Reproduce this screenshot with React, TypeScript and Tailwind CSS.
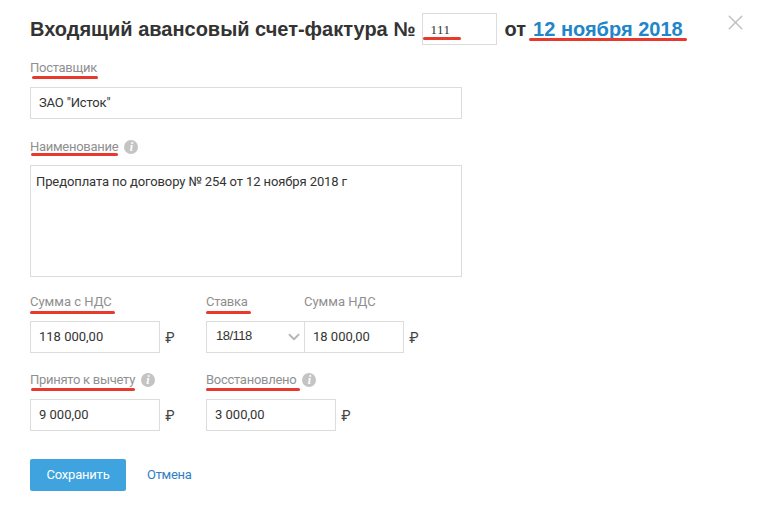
import { ChevronDown, X } from "lucide-react";
import { ReactNode } from "react";

const Underline = ({ className }: { className: string }) => (
    <span className={"absolute h-[3px] rounded-full bg-[#e8392f] " + className} />
);

const Info = () => (
    <span className="ml-[6px] flex h-[14px] w-[14px] items-center justify-center rounded-full bg-[#c4c4c4] font-['Liberation_Serif',serif] text-[12px] font-bold italic leading-none tracking-normal text-white">
        i
    </span>
);

const Label = ({ text, info, line, wide }: { text: string; info?: boolean; line?: string; wide?: boolean }) => (
    <div
        className={
            "relative flex h-[18px] items-center text-[13px] leading-[18px] text-[#8f8f8f] " +
            (wide ? "tracking-normal" : "tracking-[-0.28px]")
        }
    >
        {text}
        {info && <Info />}
        {line && <Underline className={line} />}
    </div>
);

const Field = ({ value, className }: { value: string; className: string }) => (
    <div className={"flex h-8 items-center border border-[#dcdcdc] pl-2 text-[13px] text-[#333333] " + className}>
        {value}
    </div>
);

const Ruble = ({ className }: { className: string }) => (
    <span className={"pt-[2px] font-['Inter',sans-serif] text-[14px] leading-none text-[#444444] " + className}>₽</span>
);

const Column = ({ children, className }: { children: ReactNode; className: string }) => (
    <div className={"flex flex-col gap-[10px] " + className}>{children}</div>
);

const App = () => {
    return (
        <div className="relative h-[512px] w-[762px] overflow-hidden bg-white pl-[30px] pt-[13px] font-['Roboto',sans-serif]">
            <div className="flex h-8 items-center font-['Liberation_Sans',sans-serif] text-[20px] font-bold text-[#333333]">
                <span>Входящий авансовый счет-фактура №</span>
                <div className="relative ml-[6px] flex h-8 w-[75px] items-center border border-[#dcdcdc] pl-2 pt-[2px] font-['Liberation_Serif',serif] text-[13px] font-normal tracking-[0.4px] text-[#333333]">
                    111
                    <Underline className="left-0 top-[23px] w-[38px]" />
                </div>
                <span className="ml-2">от</span>
                <span className="relative ml-[7px] text-[#2186c9]">
                    12 ноября 2018
                    <Underline className="-left-1 top-[24px] h-[3px] w-[158px]" />
                </span>
            </div>
            <button className="absolute left-[723px] top-[10px] text-[#c0c0c0]">
                <X size={25} strokeWidth={1.4} />
            </button>

            <div className="mt-[14px] w-[432px]">
                <Label text="Поставщик" line="left-[2px] top-[17px] w-[66px]" />
                <div className="mt-[10px] flex h-8 items-center border border-[#dcdcdc] pl-2 text-[13px] tracking-[-0.15px] text-[#333333]">
                    ЗАО "Исток"
                </div>
                <div className="mt-[19px]">
                    <Label text="Наименование" info line="left-[1px] top-[15px] w-[87px]" />
                </div>
                <div className="mt-[9px] h-[112px] border border-[#dcdcdc] px-[5px] py-[7px] text-[13px] leading-[18px] tracking-[-0.1px] text-[#333333]">
                    Предоплата по договору № 254 от 12 ноября 2018 г
                </div>
            </div>

            <div className="mt-[16px] flex">
                <Column className="w-[176px]">
                    <Label text="Сумма с НДС" wide line="left-0 top-[18px] w-[85px]" />
                    <div className="flex items-center">
                        <Field value="118 000,00" className="w-[130px]" />
                        <Ruble className="ml-[5px]" />
                    </div>
                </Column>
                <Column className="w-[98px]">
                    <Label text="Ставка" line="left-0 top-[18px] w-[45px]" />
                    <div className="flex h-8 w-[99px] items-center justify-between border border-r-0 border-[#dcdcdc] pl-[9px] pr-[2px] font-['Liberation_Sans',sans-serif] text-[13px] tracking-[-0.5px] text-[#333333]">
                        <span className="-mt-[2px]">18/118</span>
                        <ChevronDown size={18} strokeWidth={2.4} className="text-[#b5b5b5]" />
                    </div>
                </Column>
                <Column className="">
                    <Label text="Сумма НДС" wide />
                    <div className="flex items-center">
                        <Field value="18 000,00" className="w-[100px]" />
                        <Ruble className="ml-[5px]" />
                    </div>
                </Column>
            </div>

            <div className="mt-[18px] flex">
                <Column className="w-[176px]">
                    <Label text="Принято к вычету" info line="left-[1px] top-[17px] w-[104px]" />
                    <div className="flex items-center">
                        <Field value="9 000,00" className="w-[130px]" />
                        <Ruble className="ml-[5px]" />
                    </div>
                </Column>
                <Column className="">
                    <Label text="Восстановлено" info line="left-0 top-[17px] w-[94px]" />
                    <div className="flex items-center">
                        <Field value="3 000,00" className="w-[130px]" />
                        <Ruble className="ml-[5px]" />
                    </div>
                </Column>
            </div>

            <div className="mt-[28px] flex items-center">
                <button className="h-8 w-24 rounded-[2px] bg-[#3ea3df] text-[13px] tracking-[-0.2px] text-white">Сохранить</button>
                <a className="ml-[21px] text-[13px] tracking-[-0.3px] text-[#2f80c5]">Отмена</a>
            </div>
        </div>
    );
};

export default App;
